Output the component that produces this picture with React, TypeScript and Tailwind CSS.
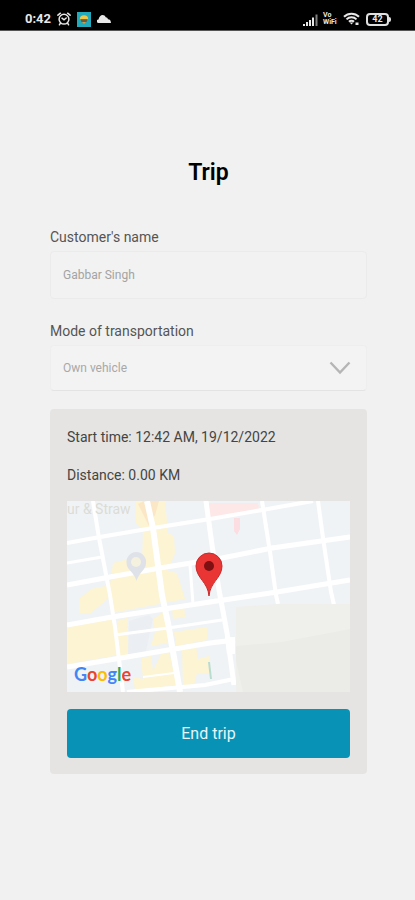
import type { ReactNode } from "react";

const googleLetters = [
  { ch: "G", color: "text-[#4285f4]" },
  { ch: "o", color: "text-[#ea4335]" },
  { ch: "o", color: "text-[#fbbc05]" },
  { ch: "g", color: "text-[#4285f4]" },
  { ch: "l", color: "text-[#34a853]" },
  { ch: "e", color: "text-[#ea4335]" },
];

// [path, stroke width]
const roads: [string, number][] = [
  ["M26 0L32 37L43 94L48 126L56 191", 4],
  ["M80 0L86 27L95 94L101 122L113 191", 6],
  ["M139 0L145 44L152 89L160 132L167 184", 5],
  ["M195 0L203 51L209 94L211 103", 4],
  ["M251 0L256 37L264 91L267 104", 4],
  ["M123 64L126 103", 3],
  ["M0 42L33 36L86 27L143 18L195 9L246 0", 4],
  ["M0 62L35 56", 3],
  ["M0 84L43 76L93 67L155 57L205 47L283 36", 5],
  ["M0 124L45 116L143 101L210 91L283 79", 5],
  ["M48 134L101 127L155 119", 3],
  ["M0 166L48 158L143 142L168 139", 5],
  ["M60 191L138 184L167 178", 4],
  ["M76 176L107 172", 2],
];

function StatusBar() {
  return (
    <header className="flex h-[31px] items-center justify-between border-b border-[#555] bg-black pt-2 pr-6 pl-[25px] text-[#e8e8e8]">
      <div className="flex items-center gap-[6px]">
        <span className="text-[13px] leading-4 font-bold">0:42</span>
        <svg className="h-[14px] w-[14px]" viewBox="0 0 14 14" fill="none" stroke="currentColor" strokeWidth="1.5" strokeLinecap="round" aria-label="Alarm">
          <circle cx="7" cy="7.2" r="4.9" />
          <path d="M.9 3.2L3.4 1.2M13.1 3.2L10.6 1.2M3.4 11.2L2.4 12.8M10.6 11.2L11.6 12.8M5 6.2L7 7.8L9.2 6" />
        </svg>
        <svg className="h-[15px] w-[14px]" viewBox="0 0 14 15" aria-label="App">
          <rect width="14" height="15" fill="#22a9bb" />
          <path d="M2.8 7.3a4.2 4 0 0 1 8.4 0z" fill="#f0c64a" />
          <path d="M3.5 7.3h7L9.6 10H4.4z" fill="#6b5a3c" />
          <path d="M5 10h4l-2 2z" fill="#d89a3a" />
        </svg>
        <svg className="h-2 w-[14px]" viewBox="0 0 14 8" fill="currentColor" aria-label="Cloud">
          <path d="M1.500 8a1.800 1.800 0 0 1 0-3.600C2.200 1.800 3.700 0 5.600 0c1.500 0 2.500.8 3.100 2.200 1.200 0 2 .7 2.300 2 1.800 0 2.800.9 3 3.800z" />
        </svg>
      </div>
      <div className="flex items-center gap-1">
        <svg className="h-[13px] w-4" viewBox="0 0 16 13" fill="currentColor" aria-label="Signal">
          <path d="M0 11h2v2H0zM3 9h2v4H3zM6 7h2v6H6zM9 4.500h2V13H9z" />
          <path d="M12.500 1.500h2V13h-2z" opacity=".55" />
        </svg>
        <span className="flex w-4 flex-col text-[7px] leading-[7px] font-bold">
          <span>Vo</span>
          <span>WiFi</span>
        </span>
        <svg className="h-[14px] w-[17px]" viewBox="0 0 17 14" fill="none" stroke="currentColor" aria-label="Wi-Fi">
          <path d="M1 4.800a10.500 10.500 0 0 1 15 0M3.500 7.400a7 7 0 0 1 10 0M6 9.800a3.500 3.500 0 0 1 5 0" strokeWidth="2" />
          <path d="M6.700 10.500h3.600L8.500 12.500z" fill="currentColor" stroke="none" />
          <path d="M12.500 10.500h3v2.500h-3z" fill="currentColor" stroke="none" />
        </svg>
        <div className="ml-[2px] flex items-center">
          <span className="flex h-[13px] w-[23px] items-center justify-center rounded-[4px] border-2 border-[#e0e0e0] text-[9px] leading-[9px] font-bold">42</span>
          <span className="h-[5px] w-[2px] rounded-r-sm bg-[#e0e0e0]" />
        </div>
      </div>
    </header>
  );
}

function Field({ id, label, children }: { id: string; label: string; children: ReactNode }) {
  return (
    <div>
      <label htmlFor={id} className="block text-sm leading-5 text-[#555]">{label}</label>
      {children}
    </div>
  );
}

function TripMap() {
  return (
    <div className="relative overflow-hidden">
      <svg className="block w-full" viewBox="0 0 283 191" role="img" aria-label="Current location map">
        <rect width="283" height="191" fill="#f0f3f5" />
        <g fill="#fcf4d2">
          <path d="M69 0H98L101 32L107 35L108 52L101 70L110 72L118 98L45 112L43 96L24 112H12V98L24 88L43 84L46 62L62 58L75 62L76 30L69 22z" />
          <path d="M0 126L45 118L52 154L0 163z" />
          <path d="M50 120L60 117L62 154L52 154zM86 118L98 110L101 142L84 145L88 131zM105 107L117 104L118 116L106 118zM107 131L140 126L140 139L109 145z" />
          <path d="M74 157L84 155L86 170L94 153L102 151L110 184L68 189L66 176L76 178zM115 147L129 145L131 158L142 155L143 172L130 172L127 184L116 185z" />
        </g>
        <path d="M71 3L77 0H92L88 14L82 25z" fill="#fbe6c5" />
        <path d="M140 2H191L192 9L142 18z" fill="#fde7e7" />
        <path d="M167 17H173V28L170 34L167 30z" fill="#fcdde1" />
        <path d="M62 120L82 114L86 118L78 154L61 157z" fill="#ebeef2" />
        <g fill="none" stroke="#fff">
          {roads.map(([d, w]) => <path key={d} d={d} strokeWidth={w} />)}
        </g>
        <path d="M158 136h10v17h-8z" fill="#fff" />
        <path d="M169 106L210 103H283V191H169" fill="#efefeb" />
        <path d="M169 145L215 141L283 128V191H176L169 160z" fill="#ebebe8" />
        <path d="M142 161L144 178" stroke="#b9dcd0" strokeWidth="2" />
        <path d="M69 51a10 10 0 0 1 10 11c0 7-7 9-9.500 18c-2-9-10-11-10-18a10 10 0 0 1 9.500-11z" fill="#dfe2e8" />
        <circle cx="69" cy="61" r="5" fill="#f4f1df" />
        <path d="M142 95c-1-14-13-18-13-30a13 13 0 0 1 26 0c0 12-12 16-13 30z" fill="#ea3535" stroke="#c92a2a" strokeWidth="1" />
        <circle cx="142" cy="65" r="5" fill="#7d1012" />
      </svg>
      <span className="absolute top-0 left-0 text-sm leading-4 text-[#dcdcd5]">ur &amp; Straw</span>
      <span className="absolute bottom-2 left-[7px] font-['Lato',sans-serif] text-lg leading-5 font-bold" aria-label="Google">
        {googleLetters.map((l, i) => <span key={i} className={l.color}>{l.ch}</span>)}
      </span>
    </div>
  );
}

export default function App() {
  return (
    <div className="min-h-screen bg-[#f1f1f1] font-['Roboto',sans-serif]">
      <StatusBar />
      <main className="pt-32 pr-12 pb-8 pl-[50px]">
        <h1 className="text-center text-[23px] leading-7 font-semibold text-black">Trip</h1>

        <form className="mt-10 space-y-[22px]">
          <Field id="customer" label="Customer's name">
            <input
              id="customer"
              type="text"
              readOnly
              defaultValue="Gabbar Singh"
              className="mt-1 block h-12 w-full rounded-sm border border-[#ebebeb] bg-[#f2f2f2] px-3 text-xs text-[#a3a3a3] outline-none"
            />
          </Field>
          <Field id="mode" label="Mode of transportation">
            <div className="relative mt-1">
              <select
                id="mode"
                defaultValue="own"
                className="block h-[46px] w-full appearance-none rounded-sm border border-[#eeeeee] border-b-[#e3e3e3] bg-[#f3f3f3] px-3 text-xs text-[#a8a8a8] outline-none"
              >
                <option value="own">Own vehicle</option>
              </select>
              <svg className="pointer-events-none absolute top-4 right-4 h-[14px] w-[22px]" viewBox="0 0 22 14" fill="none" stroke="#b5b5b5" strokeWidth="2.4" aria-hidden="true">
                <path d="M1.500 1.500L11 11.500L20.500 1.500" />
              </svg>
            </div>
          </Field>
        </form>

        <section className="mt-[18px] rounded bg-[#e5e4e2] px-[17px] pt-[18px] pb-4 text-sm leading-5 text-[#444]">
          <p>Start time: 12:42 AM, 19/12/2022</p>
          <p className="mt-[18px] mb-4">Distance: 0.00 KM</p>
          <TripMap />
          <button type="button" className="mt-[17px] block h-[49px] w-full rounded bg-[#0892b6] text-base text-[#e6f6fa]">End trip</button>
        </section>
      </main>
    </div>
  );
}
